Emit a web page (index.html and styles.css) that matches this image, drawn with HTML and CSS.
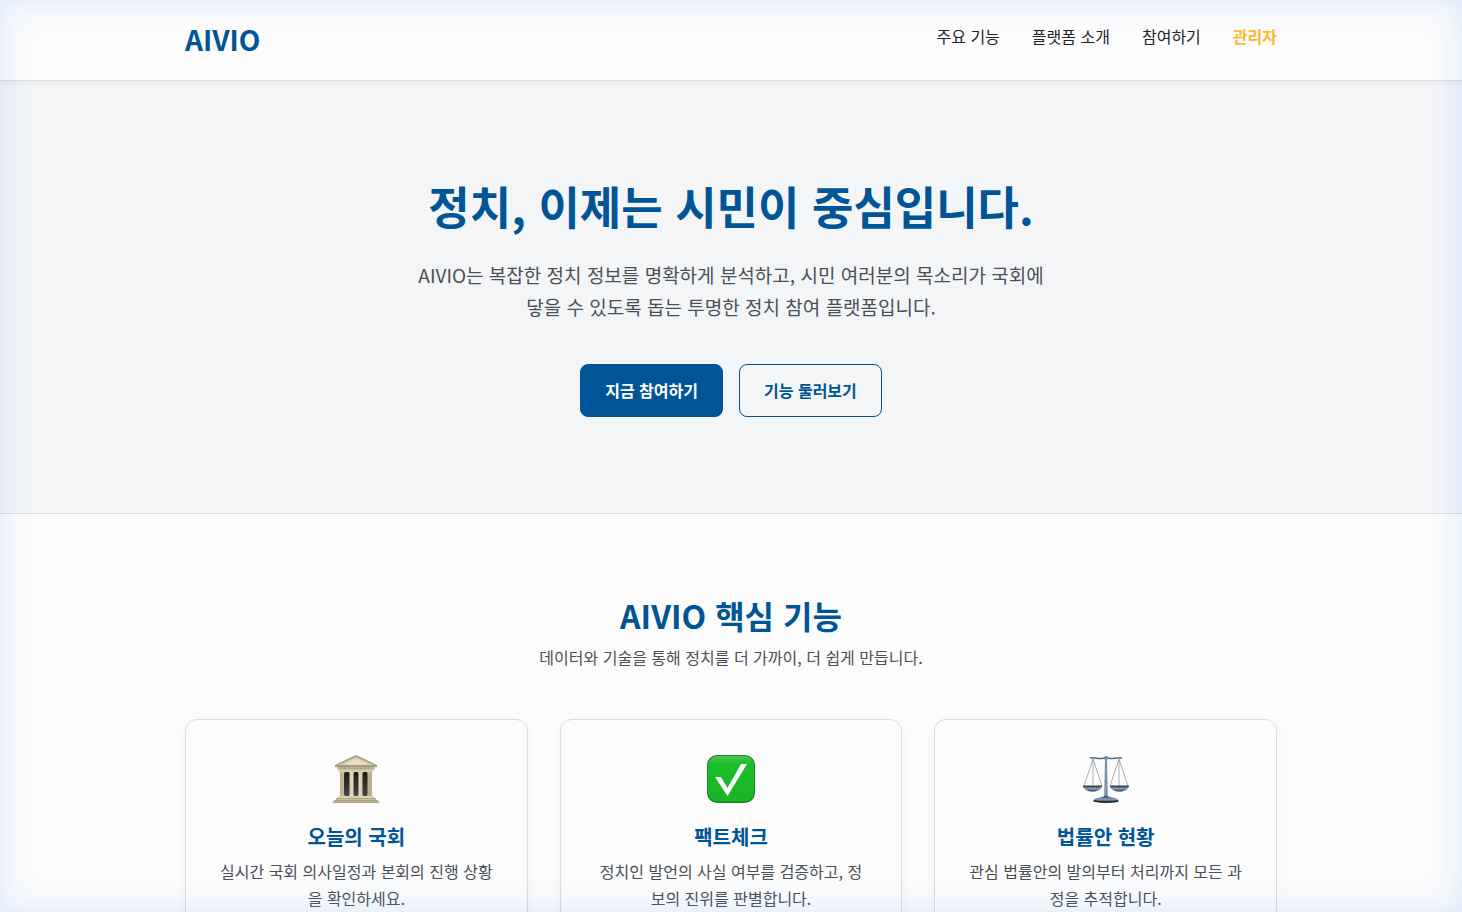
FILE: index.html
```html
<!DOCTYPE html>
<html lang="ko">
<head>
<meta charset="utf-8">
<meta name="viewport" content="width=device-width, initial-scale=1">
<title>AIVIO</title>
<link rel="stylesheet" href="styles.css">
</head>
<body>
<header class="header">
  <div class="container header-inner">
    <a class="logo" href="#">AIVIO</a>
    <nav class="nav">
      <a href="#features">주요 기능</a>
      <a href="#about">플랫폼 소개</a>
      <a href="#join">참여하기</a>
      <a class="admin" href="#admin">관리자</a>
    </nav>
  </div>
</header>
<main>
  <section class="hero">
    <div class="container">
      <h1>정치, 이제는 시민이 중심입니다.</h1>
      <p class="lead">AIVIO는 복잡한 정치 정보를 명확하게 분석하고, 시민 여러분의 목소리가 국회에 닿을 수 있도록 돕는 투명한 정치 참여 플랫폼입니다.</p>
      <div class="actions">
        <a class="btn btn-primary" href="#join">지금 참여하기</a>
        <a class="btn btn-outline" href="#features">기능 둘러보기</a>
      </div>
    </div>
  </section>
  <section class="features" id="features">
    <div class="container">
      <h2>AIVIO 핵심 기능</h2>
      <p class="subtitle">데이터와 기술을 통해 정치를 더 가까이, 더 쉽게 만듭니다.</p>
      <div class="grid">
        <article class="card">
          <div class="icon">
            <svg viewBox="0 0 48 48" aria-hidden="true">
              <defs>
                <linearGradient id="col" x1="0" x2="1" y1="0" y2="0"><stop offset="0" stop-color="#b5ad8c"/><stop offset=".5" stop-color="#ece5c9"/><stop offset="1" stop-color="#aea684"/></linearGradient>
                <linearGradient id="step" x1="0" x2="0" y1="0" y2="1"><stop offset="0" stop-color="#ddd6b8"/><stop offset="1" stop-color="#b5ad88"/></linearGradient>
                <linearGradient id="dark" x1="0" x2="0" y1="0" y2="1"><stop offset="0" stop-color="#1f1b10"/><stop offset="1" stop-color="#4a4347"/></linearGradient>
              </defs>
              <path d="M8 15h32v27H8z" fill="#c9c19f"/>
              <rect x="12" y="17" width="6" height="24" rx="2" fill="url(#dark)"/>
              <rect x="21" y="17" width="6" height="24" rx="2" fill="url(#dark)"/>
              <rect x="30" y="17" width="6" height="24" rx="2" fill="url(#dark)"/>
              <path d="M8 17h4v24H8zM17.500 17h4v24h-4zM26.500 17h4v24h-4zM35.500 17h4v24h-4z" fill="url(#col)"/>
              <path d="M6 15h36l-1 2H7z" fill="#d6ceb0"/>
              <path d="M24 0 45 10v2H3v-2z" fill="#a69e7c"/>
              <path d="M24 2 42 10H6z" fill="#d8d0b1"/>
              <path d="m24 4 12 5.500H12z" fill="#e8e1c7"/>
              <path d="M5 12h38v2l-2 1H7l-2-1z" fill="#c4bc98"/>
              <path d="M8 13h33" stroke="#9c9575" stroke-dasharray="3 1"/>
              <path d="M6 41h36v2h2v2h2l1 3H1l1-3h2v-2h2z" fill="url(#step)"/>
              <path d="M4 43.500h40M3 45.500h42M1 47.500h46" stroke="#a09875" stroke-width=".7"/>
            </svg>
          </div>
          <h3>오늘의 국회</h3>
          <p>실시간 국회 의사일정과 본회의 진행 상황을 확인하세요.</p>
        </article>
        <article class="card">
          <div class="icon">
            <svg viewBox="0 0 48 48" aria-hidden="true">
              <defs>
                <linearGradient id="green" x1="0" x2="0" y1="0" y2="1"><stop offset="0" stop-color="#4ac654"/><stop offset=".18" stop-color="#20b92c"/><stop offset=".2" stop-color="#1abf29"/><stop offset="1" stop-color="#19b327"/></linearGradient>
              </defs>
              <rect width="48" height="48" rx="10" fill="#168a22"/>
              <rect x="1" y="1" width="46" height="45.500" rx="9" fill="url(#green)"/>
              <path d="M8 22h6l6.500 11L34 9h6L20.500 41z" fill="#fff"/>
            </svg>
          </div>
          <h3>팩트체크</h3>
          <p>정치인 발언의 사실 여부를 검증하고, 정보의 진위를 판별합니다.</p>
        </article>
        <article class="card">
          <div class="icon">
            <svg viewBox="0 0 48 48" aria-hidden="true">
              <defs>
                <linearGradient id="pole" x1="0" x2="1" y1="0" y2="0"><stop offset="0" stop-color="#344b60"/><stop offset=".5" stop-color="#9bb9d3"/><stop offset="1" stop-color="#344b60"/></linearGradient>
                <linearGradient id="pan" x1="0" x2="0" y1="0" y2="1"><stop offset="0" stop-color="#2f3e4c"/><stop offset=".5" stop-color="#86a4bd"/><stop offset="1" stop-color="#26323d"/></linearGradient>
              </defs>
              <path d="M11 4 2 31M11 4v27M11 4l9 27M37 4l-9 27M37 4v27M37 4l9 27" fill="none" stroke="#8c8e91" stroke-width=".7"/>
              <path d="M8 3c6-1 9 2 14 0l2-1 2 1c5 2 8-1 14 0" fill="none" stroke="#506d86" stroke-width="1.500"/>
              <circle cx="24" cy="3" r="2" fill="#6f8da6"/>
              <path d="M23 4h2l.5 38h-3z" fill="url(#pole)"/>
              <path d="M1 31h19c-1 4-5 5.500-9.500 5.500S2 35 1 31zM28 31h19c-1 4-5 5.500-9.500 5.500S29 35 28 31z" fill="url(#pan)"/>
              <path d="M1 31h19M28 31h19" stroke="#34414e"/>
              <path d="M22 41h4c1 2 10 1 11 5 0 2-26 2-26 0 1-4 10-3 11-5z" fill="url(#pan)"/>
              <path d="M12 46c6 1.500 18 1.500 24 0" fill="none" stroke="#1c252d" stroke-width="1.500"/>
            </svg>
          </div>
          <h3>법률안 현황</h3>
          <p>관심 법률안의 발의부터 처리까지 모든 과정을 추적합니다.</p>
        </article>
      </div>
    </div>
  </section>
</main>
<div class="edge-glow" aria-hidden="true"></div>
</body>
</html>
```
FILE: styles.css
```css
* { box-sizing: border-box; margin: 0; padding: 0; }

body {
  font-family: "Noto Sans CJK KR", "Noto Sans", sans-serif;
  font-size: 16px;
  line-height: 27px;
  color: #212529;
  background: #fcfcfc;
}

a { color: inherit; text-decoration: none; }

h1, h2, h3, .logo { color: #005596; font-weight: 700; }

.container { max-width: 1140px; margin: 0 auto; padding: 0 24px; }

.header {
  position: relative;
  background: #fcfcfc;
  border-bottom: 1px solid #dadde2;
  box-shadow: 0 2px 4px rgba(0, 0, 0, .05);
}
.header-inner {
  display: flex;
  align-items: center;
  justify-content: space-between;
  padding-top: 16px;
  padding-bottom: 18px;
}
.logo { font-size: 28px; line-height: 46px; }
.nav { display: flex; gap: 32px; padding-bottom: 6px; }
.nav .admin { color: #fdb92e; font-weight: 700; }

.hero {
  padding: 96px 0;
  text-align: center;
  background: #f4f5f7;
  border-bottom: 1px solid #dadde2;
}
.hero h1 { font-size: 45px; line-height: 58px; margin-bottom: 24px; }
.lead {
  max-width: 640px;
  margin: 0 auto 41px;
  font-size: 19px;
  line-height: 32px;
  color: #495057;
}
.actions { display: flex; justify-content: center; gap: 16px; }
.btn {
  padding: 12px 24px;
  font-weight: 700;
  border: 1px solid #005596;
  border-radius: 8px;
}
.btn-primary { color: #fff; background: #005596; }
.btn-outline { color: #005596; }

.features { padding: 80px 0; text-align: center; }
.features h2 { font-size: 32px; line-height: 42px; margin-bottom: 8px; }
.subtitle { margin-bottom: 48px; color: #495057; }

.grid { display: grid; grid-template-columns: repeat(3, 1fr); gap: 32px; }
.card {
  padding: 32px;
  background: #fcfcfc;
  border: 1px solid #dadde2;
  border-radius: 12px;
  box-shadow: 0 4px 12px rgba(0, 0, 0, .04);
}
.icon {
  display: flex;
  align-items: center;
  justify-content: center;
  height: 54px;
  margin-bottom: 16px;
}
.icon svg { width: 48px; height: 48px; }
.card h3 { font-size: 20px; line-height: 30px; margin-bottom: 6px; }
.card p { color: #495057; }

.edge-glow {
  position: fixed;
  inset: 0;
  pointer-events: none;
  box-shadow: inset 0 0 32px rgba(80, 160, 255, .22);
}

@media (max-width: 800px) {
  .grid { grid-template-columns: 1fr; }
  .header-inner { flex-wrap: wrap; }
}
```
